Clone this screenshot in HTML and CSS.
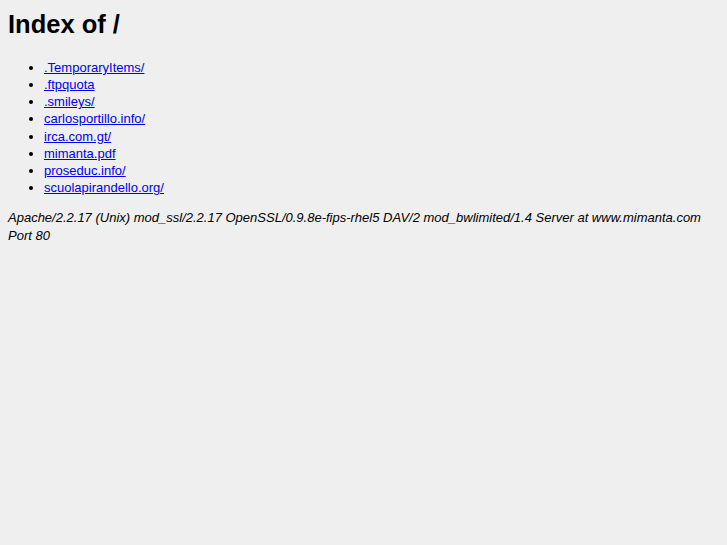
FILE: index.html
```html
<!DOCTYPE html>
<html>
<head>
<meta charset="utf-8">
<title>Index of /</title>
<link rel="stylesheet" href="styles.css">
</head>
<body>
<h1 class="title">Index of /</h1>
<ul class="listing">
<li><a href="#">.TemporaryItems/</a></li>
<li><a href="#">.ftpquota</a></li>
<li><a href="#">.smileys/</a></li>
<li><a href="#">carlosportillo.info/</a></li>
<li><a href="#">irca.com.gt/</a></li>
<li><a href="#">mimanta.pdf</a></li>
<li><a href="#">proseduc.info/</a></li>
<li><a href="#">scuolapirandello.org/</a></li>
</ul>
<address class="server">Apache/2.2.17 (Unix) mod_ssl/2.2.17 OpenSSL/0.9.8e-fips-rhel5 DAV/2 mod_bwlimited/1.4 Server at www.mimanta.com Port 80</address>
</body>
</html>
```
FILE: styles.css
```css
html {
  background: #efefef;
}
body {
  margin: 0;
  padding: 9px 8px 8px;
  font-family: "Liberation Sans", Arial, sans-serif;
  font-size: 13px;
  color: #000;
}
.title {
  font-size: 25.5px;
  font-weight: bold;
  line-height: 30px;
  margin: 0 0 20px;
}
.listing {
  margin: 0 0 13px;
  padding-left: 36px;
}
.listing li {
  line-height: 17.15px;
}
.listing a {
  color: #0000ee;
}
.server {
  font-style: italic;
  line-height: 18px;
}
```
